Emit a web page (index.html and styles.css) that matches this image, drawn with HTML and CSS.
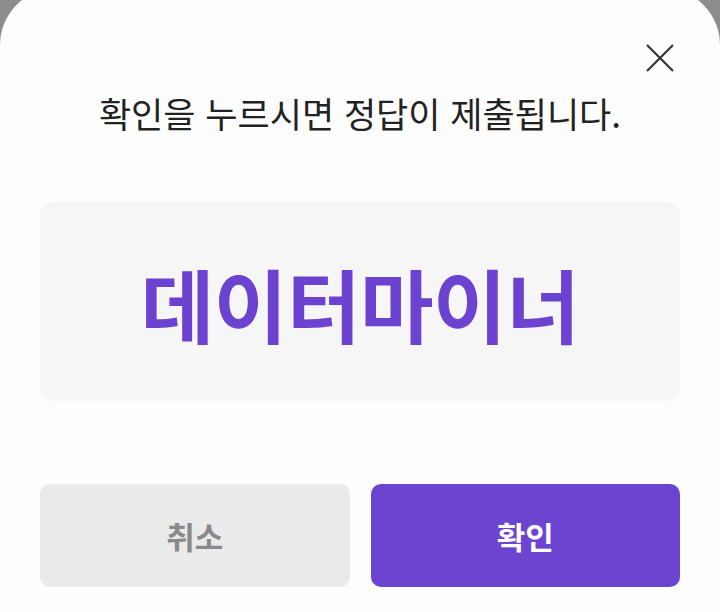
FILE: index.html
```html
<!DOCTYPE html>
<html lang="ko">
<head>
<meta charset="utf-8">
<link rel="stylesheet" href="styles.css">
</head>
<body>
<div class="sheet">
  <button class="close" aria-label="닫기">
    <svg width="28" height="28" viewBox="0 0 28 28"><path d="M1 1L27 27M27 1L1 27" stroke="#333" stroke-width="2.2" fill="none"/></svg>
  </button>
  <p class="title">확인을 누르시면 정답이 제출됩니다.</p>
  <div class="answer"><span>데이터마이너</span></div>
  <div class="actions">
    <button class="btn cancel">취소</button>
    <button class="btn confirm">확인</button>
  </div>
</div>
</body>
</html>
```
FILE: styles.css
```css
html, body {
  margin: 0;
  height: 100%;
  overflow: hidden;
}
body {
  background: #8c8c8c;
  font-family: "Noto Sans CJK KR", "Noto Sans", sans-serif;
}
.sheet {
  position: relative;
  box-sizing: border-box;
  margin-top: -12px;
  height: 624px;
  background: #fdfdfd;
  border-radius: 57px 57px 0 0;
  padding: 0 40px;
  display: flex;
  flex-direction: column;
}
.close {
  position: absolute;
  top: 56px;
  right: 46px;
  padding: 0;
  border: 0;
  background: none;
  width: 28px;
  height: 28px;
}
.close svg { display: block; }
.title {
  margin: 101px 0 0;
  text-align: center;
  font-size: 35px;
  line-height: 48px;
  color: #222;
}
.answer {
  margin-top: 65px;
  height: 199px;
  background: #f6f6f6;
  border-radius: 14px;
  display: flex;
  align-items: center;
  justify-content: center;
}
.answer span {
  font-size: 80px;
  font-weight: 700;
  color: #6b43d0;
  letter-spacing: -0.5px;
}
.actions {
  margin-top: 83px;
  display: grid;
  grid-template-columns: 1fr 1fr;
  gap: 21px;
}
.btn {
  height: 103px;
  border: 0;
  border-radius: 10px;
  font-family: inherit;
  font-size: 31px;
  font-weight: 700;
}
.cancel {
  background: #eaeaea;
  color: #8a8a8a;
}
.confirm {
  background: #6b44d0;
  color: #fff;
}
```
